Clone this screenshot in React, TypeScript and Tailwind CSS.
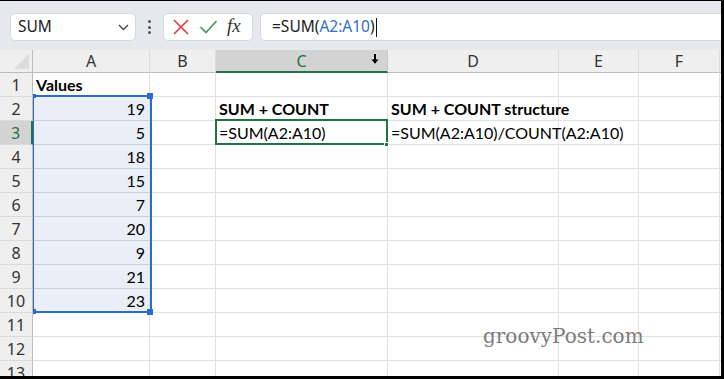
import React from "react";

type Row = { n: number; a?: string; c?: string; d?: string; bold?: boolean };

const rows: Row[] = [
    { n: 1, a: "Values", bold: true },
    { n: 2, a: "19", c: "SUM + COUNT", d: "SUM + COUNT structure", bold: true },
    { n: 3, a: "5", c: "=SUM(A2:A10)", d: "=SUM(A2:A10)/COUNT(A2:A10)" },
    { n: 4, a: "18" },
    { n: 5, a: "15" },
    { n: 6, a: "7" },
    { n: 7, a: "20" },
    { n: 8, a: "9" },
    { n: 9, a: "21" },
    { n: 10, a: "23" },
    { n: 11 },
    { n: 12 },
    { n: 13 },
];

const headers = ["A", "B", "C", "D", "E", "F", ""];

const cellFont = { fontFamily: "Lato, 'Noto Sans', sans-serif" };
const uiFont = { fontFamily: "'Noto Sans', 'Open Sans', sans-serif" };

function FormulaBar() {
    return (
        <div className="h-[49px] bg-[#e5e8ed] flex items-start pt-[12px] pl-[10px] gap-0" style={uiFont}>
            <div className="w-[126px] h-[28px] bg-white rounded-[5px] border border-[#d6d9de] flex items-center justify-between pl-[7px] pr-[6px]">
                <span className="text-[15.5px] text-[#222]">SUM</span>
                <svg width="11" height="7" viewBox="0 0 11 7">
                    <path d="M1 1 L5.5 5.5 L10 1" fill="none" stroke="#444" strokeWidth="1.3" />
                </svg>
            </div>
            <div className="w-[27px] h-[28px] flex flex-col items-center justify-center gap-[2.5px]">
                <span className="w-[3px] h-[3px] bg-[#555] rounded-full" />
                <span className="w-[3px] h-[3px] bg-[#555] rounded-full" />
                <span className="w-[3px] h-[3px] bg-[#555] rounded-full" />
            </div>
            <div className="w-[90px] h-[28px] bg-white rounded-[5px] border border-[#d6d9de] flex items-center pl-[8px] gap-[9px]">
                <svg width="18" height="18" viewBox="0 0 18 18">
                    <path d="M2 2 L16 16 M16 2 L2 16" stroke="#e0393e" strokeWidth="1.6" />
                </svg>
                <svg width="19" height="16" viewBox="0 0 19 16">
                    <path d="M1.5 8 L7 13.5 L17.5 2" fill="none" stroke="#3f9b52" strokeWidth="1.7" />
                </svg>
                <span className="text-[19px] italic text-[#333] leading-none -mt-[3px]" style={{ fontFamily: "'Liberation Serif', serif" }}>
                    fx
                </span>
            </div>
            <div className="flex-1 h-[28px] ml-[7px] -mr-[4px] bg-white rounded-[5px] border border-[#d6d9de] flex items-center pl-[11px]">
                <span className="text-[15.5px] text-[#222]">
                    =SUM(<span className="text-[#2f6ec4]">A2:A10</span>)
                </span>
                <span className="w-px h-[19px] bg-[#111] ml-[1px]" />
            </div>
        </div>
    );
}

function CornerCell() {
    return (
        <div className="h-[23px] bg-[#efefef] border-r border-b border-[#bdbdbd] flex items-end justify-end pr-[3px] pb-[3px]">
            <svg width="15" height="15" viewBox="0 0 15 15">
                <path d="M15 0 L15 15 L0 15 Z" fill="#dcdcdc" />
            </svg>
        </div>
    );
}

function ColHeader({ label }: { label: string }) {
    const sel = label === "C";
    return (
        <div
            className={
                sel
                    ? "h-[23px] bg-[#d3d3d3] border-b-2 border-b-[#217346] border-r border-r-[#c8c8c8] flex items-center justify-center text-[16px] text-[#217346] relative"
                    : "h-[23px] bg-[#efefef] border-b border-b-[#bdbdbd] border-r border-r-[#dcdcdc] flex items-center justify-center text-[16px] text-[#333]"
            }
            style={uiFont}
        >
            {label}
            {sel && (
                <svg className="absolute right-[7px] top-[3px]" width="10" height="12" viewBox="0 0 10 12">
                    <path d="M3.5 0.5 H6.5 V6 H9.5 L5 11.5 L0.5 6 H3.5 Z" fill="#000" stroke="#fff" strokeWidth="0.8" />
                </svg>
            )}
        </div>
    );
}

function RowHeader({ n }: { n: number }) {
    const sel = n === 3;
    return (
        <div
            className={
                sel
                    ? "h-[24px] bg-[#d3d3d3] border-r-2 border-r-[#217346] border-b border-b-[#dadada] flex items-center justify-center text-[16px] text-[#217346]"
                    : "h-[24px] bg-[#efefef] border-r border-r-[#bdbdbd] border-b border-b-[#dadada] flex items-center justify-center text-[16px] text-[#333]"
            }
            style={uiFont}
        >
            {n}
        </div>
    );
}

function Cell({ text, right, bold, inRange }: { text?: string; right?: boolean; bold?: boolean; inRange?: boolean }) {
    return (
        <div
            className={
                (inRange ? "bg-[#e9eef7] border-b-[#c9ced7] " : "border-b-[#e1e1e1] ") +
                "h-[24px] border-b border-r border-r-[#e1e1e1] flex items-center whitespace-nowrap text-[16px] text-black relative z-10 " +
                (right ? "justify-end pr-[4px] " : "justify-start pl-[3px] ") +
                (bold ? "font-bold" : "")
            }
            style={cellFont}
        >
            {text}
        </div>
    );
}

export default function App() {
    return (
        <div className="w-[724px] h-[379px] overflow-hidden bg-white border-t border-r-[3px] border-b-[3px] border-black">
            <FormulaBar />
            <div className="relative grid grid-cols-[33px_117px_66px_172px_171px_80px_81px_1fr]">
                <CornerCell />
                {headers.map((h, i) => (
                    <ColHeader key={i} label={h} />
                ))}
                {rows.map((r) => (
                    <React.Fragment key={r.n}>
                        <RowHeader n={r.n} />
                        <Cell text={r.a} right={r.n > 1} bold={r.n === 1} inRange={r.n >= 2 && r.n <= 10} />
                        <Cell />
                        <Cell text={r.c} bold={r.n === 2} />
                        <Cell text={r.d} bold={r.n === 2} />
                        <Cell />
                        <Cell />
                        <Cell />
                    </React.Fragment>
                ))}

                {/* A2:A10 reference highlight */}
                <div className="absolute z-20 left-[33px] top-[45px] w-[119px] h-[218px] border-t-2 border-r-2 border-b-2 border-l border-[#2d6bc9] pointer-events-none" />
                <span className="absolute z-20 left-[33px] top-[44px] w-[3px] h-[4px] bg-[#2d6bc9]" />
                <span className="absolute z-20 left-[147px] top-[43px] w-[6px] h-[6px] bg-[#2d6bc9]" />
                <span className="absolute z-20 left-[33px] top-[259px] w-[3px] h-[5px] bg-[#2d6bc9]" />
                <span className="absolute z-20 left-[147px] top-[259px] w-[6px] h-[6px] bg-[#2d6bc9]" />

                {/* active cell C3 */}
                <div className="absolute z-20 left-[215px] top-[69px] w-[173px] h-[26px] border-2 border-[#217346] pointer-events-none" />
                <span className="absolute z-20 left-[384px] top-[92px] w-[5px] h-[5px] bg-[#217346] border border-white" />

                <span
                    className="absolute z-20 left-[483px] top-[271px] text-[20px] text-[#7c7c7c] pointer-events-none"
                    style={{ fontFamily: "'DejaVu Serif', serif" }}
                >
                    groovyPost.com
                </span>
            </div>
        </div>
    );
}
